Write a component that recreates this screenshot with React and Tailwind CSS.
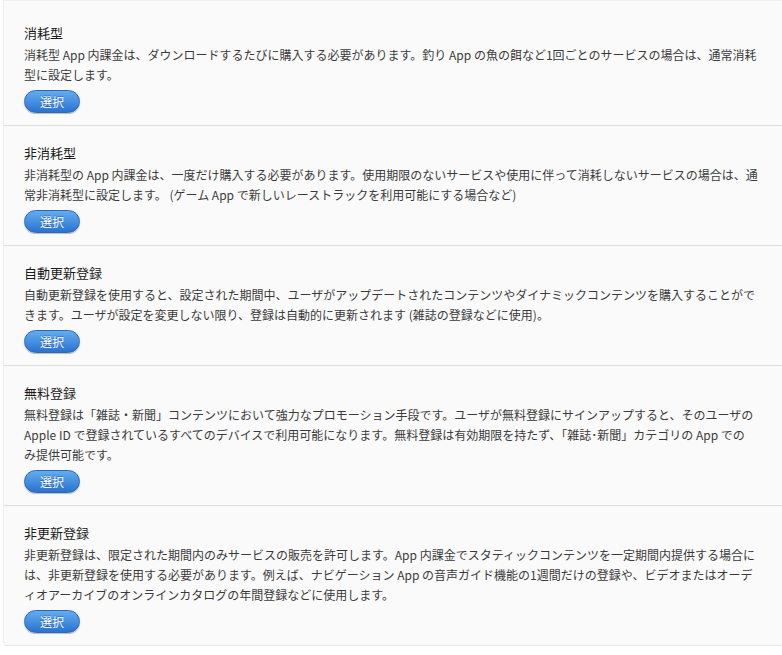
import React from 'react';

const sections = [
  {
    title: '消耗型',
    lines: [
      '消耗型 App 内課金は、ダウンロードするたびに購入する必要があります。釣り App の魚の餌など1回ごとのサービスの場合は、通常消耗',
      '型に設定します。',
    ],
  },
  {
    title: '非消耗型',
    lines: [
      '非消耗型の App 内課金は、一度だけ購入する必要があります。使用期限のないサービスや使用に伴って消耗しないサービスの場合は、通',
      '常非消耗型に設定します。 (ゲーム App で新しいレーストラックを利用可能にする場合など)',
    ],
  },
  {
    title: '自動更新登録',
    lines: [
      '自動更新登録を使用すると、設定された期間中、ユーザがアップデートされたコンテンツやダイナミックコンテンツを購入することがで',
      'きます。ユーザが設定を変更しない限り、登録は自動的に更新されます (雑誌の登録などに使用)。',
    ],
  },
  {
    title: '無料登録',
    lines: [
      '無料登録は「雑誌・新聞」コンテンツにおいて強力なプロモーション手段です。ユーザが無料登録にサインアップすると、そのユーザの',
      'Apple ID で登録されているすべてのデバイスで利用可能になります。無料登録は有効期限を持たず、「雑誌･新聞」カテゴリの App での',
      'み提供可能です。',
    ],
  },
  {
    title: '非更新登録',
    lines: [
      '非更新登録は、限定された期間内のみサービスの販売を許可します。App 内課金でスタティックコンテンツを一定期間内提供する場合に',
      'は、非更新登録を使用する必要があります。例えば、ナビゲーション App の音声ガイド機能の1週間だけの登録や、ビデオまたはオーデ',
      'ィオアーカイブのオンラインカタログの年間登録などに使用します。',
    ],
  },
];

const SelectButton = () => (
  <button
    type="button"
    className="mt-[5px] flex h-[23px] w-[56px] items-center justify-center rounded-full border border-[#2d68b8] bg-gradient-to-b from-[#62adee] to-[#2c72cf] text-[12px] text-white shadow-[0_1px_1px_rgba(0,0,0,0.25)] [text-shadow:0_-1px_0_rgba(0,0,0,0.3)]"
  >
    選択
  </button>
);

export default function App() {
  return (
    <div
      className="w-[782px] h-[655px] overflow-hidden bg-white"
      style={{ fontFamily: '"Noto Sans CJK JP", "Noto Sans", sans-serif' }}
    >
      <div className="ml-[3px] w-[800px] rounded-bl-[4px] border-b border-t border-l border-[#eeeeee] border-b-[#e6e6e6] bg-[#fafafa]">
        {sections.map((s, i) => (
          <div
            key={s.title}
            className={`px-[20px] pb-[12px] ${i === 0 ? 'pt-[23px]' : 'pt-[18px] border-t border-[#dedede]'}`}
          >
            <div className="text-[13px] leading-[18px] text-[#1a1a1a]">{s.title}</div>
            <div className="mt-[3px] text-[12px] leading-[20px] text-[#3a3a3a]">
              {s.lines.map((line) => (
                <div key={line} className="whitespace-nowrap">
                  {line}
                </div>
              ))}
            </div>
            <SelectButton />
          </div>
        ))}
      </div>
    </div>
  );
}
